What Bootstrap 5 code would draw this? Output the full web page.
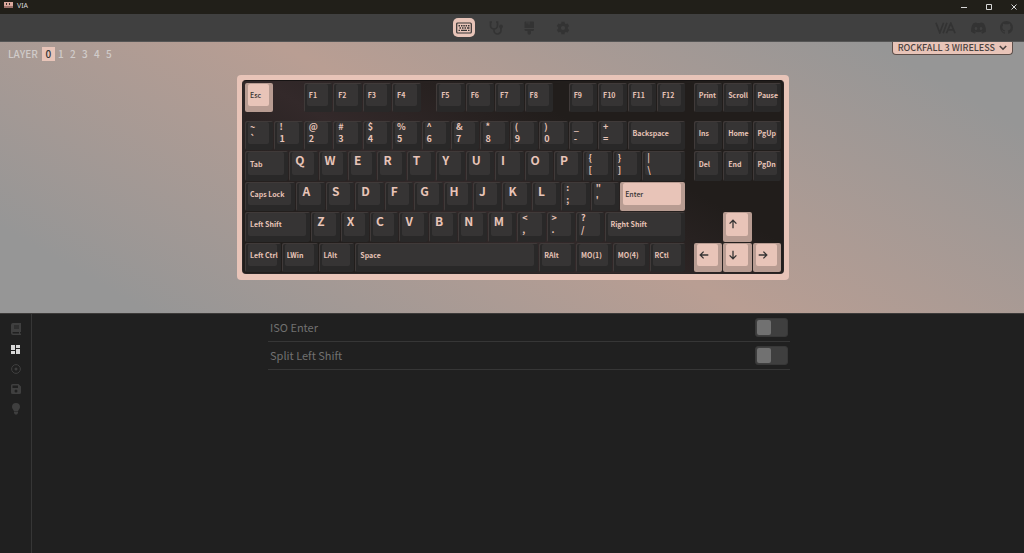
<!DOCTYPE html>
<html lang="en">
<head>
<meta charset="utf-8">
<meta name="viewport" content="width=device-width, initial-scale=1">
<title>VIA</title>
<link href="https://cdn.jsdelivr.net/npm/bootstrap@5.3.0/dist/css/bootstrap.min.css" rel="stylesheet">
<style>
:root { --accent: #e8c4b8; --accent-side: #b89c92; --ink: #363434; --bar: #404040; --panel: #202020; --line: #363636; }
body { font-family: "Noto Sans CJK SC", "Noto Sans", sans-serif; background: var(--panel); }
button { border: 0; background: none; padding: 0; color: inherit; }
svg { display: block; fill: currentColor; }
.titlebar { height: 14px; background: #211f19; color: #d8d8d8; font: 7px/12px "Noto Sans", sans-serif; }
.window-buttons { gap: 19px; padding-right: 7px; }
.topnav { display: grid; grid-template-columns: 1fr auto 1fr; height: 28px; background: var(--bar); border-bottom: 1px solid #555; color: #333; }
.tabs { gap: 11px; padding-left: 2px; }
.site-links { gap: 14px; padding-right: 11px; }
.tab-link { display: grid; place-items: center; width: 22px; height: 19px; border-radius: 5px; color: #333; }
.tab-link.active { background: var(--accent); color: var(--ink); }
.canvas { min-height: 271px; background: linear-gradient(30deg, #969696 10%, #b99e93 50%, #969696 90%); }
.layers { font-size: 10px; font-weight: 500; line-height: 14px; color: #d0cbc9; padding: 5px 0 0 8px; }
.layers button { width: 12px; height: 14px; font-weight: 500; }
.layers .active { width: 13px; background: var(--accent); color: var(--ink); }
.device { height: 13px; padding: 0 5px; border: 1px solid #5c4e49; border-top: 0; border-radius: 0 0 4px 4px; background: var(--accent); color: #4a4240; font-size: 9px; font-weight: 500; line-height: 12px; margin-right: 11px; }
.board-area { padding: 14px 0 0 2px; }
.case { width: 552px; padding: 5px 5px 6px; border-radius: 4px; background: var(--accent); }
.plate { height: 194px; padding: 2px 1px 1px 2px; border-radius: 4px; background: linear-gradient(30deg, #211d1b 15%, #33292a 40%, #211d1b 68%); border: 1px solid #2b2626; border-top-color: #161313; }
.keys { display: grid; grid-template-columns: repeat(73, 1fr); grid-template-rows: repeat(25, 1fr); height: 190px; }
.keycap { display: flex; min-width: 0; margin: 0 1px 1px 0; padding: 1px 4px 6px 3px; border-radius: 2px; background: #292828; box-shadow: inset 1px 1px 0 #403a39; color: var(--accent); text-align: left; }
.keytop { flex: 1; min-width: 0; display: flex; flex-direction: column; justify-content: center; padding-left: 2px; border-radius: 2px; background: #363434; font-size: 7px; font-weight: 700; line-height: 12px; white-space: nowrap; }
.keycap.alpha .keytop { justify-content: flex-start; font-size: 12px; line-height: 15px; padding-left: 3px; }
.keycap.pair .keytop { font-size: 9px; }
.keycap.hot { background: var(--accent-side); box-shadow: none; color: var(--ink); }
.keycap.hot .keytop { background: var(--accent); font-weight: 500; }
.rail { width: 32px; border-right: 1px solid var(--line); color: #3f3f3f; padding-top: 9px; gap: 8px; }
.rail button { display: grid; place-items: center; height: 12px; }
.rail .active { color: #d8d8d8; }
.lower { border-top: 1px solid #3c3a39; min-height: 238px; }
.options { width: 522px; margin-left: 236px; font-size: 11px; color: #717171; }
.option { height: 28px; padding: 0 2px; border-bottom: 1px solid var(--line); }
.form-check-input.toggle { display: flex; align-items: center; width: 33px; height: 19px; margin: 0; padding: 0 1px; border: 1px solid #383838; border-radius: 3px; background: #3f3f3f; }
.toggle::before { content: ""; width: 14px; height: 15px; border-radius: 2px; background: #717171; }
.form-check-input.toggle:checked { justify-content: flex-end; background: var(--accent); }
</style>
</head>
<body class="d-flex flex-column min-vh-100">
<header class="titlebar d-flex justify-content-between">
  <div class="d-flex gap-1 ps-1">
    <svg width="9" height="11" viewBox="0 0 9 11"><path fill="#dba99e" d="M0 2h9v4H0z"/><path fill="#9b706a" d="M0 6h9v2H0z"/><path fill="#39302d" d="M2 3h1v2H2zM5 3h1v2H5z"/></svg>
    <span>VIA</span>
  </div>
  <div class="window-buttons d-flex">
    <button aria-label="Minimise"><svg width="6" height="10"><path d="M0 5h6v1H0z"/></svg></button>
    <button aria-label="Maximise"><svg width="6" height="10" viewBox="0 0 6 10"><path fill="none" stroke="currentColor" d="M.5 2.500h5v5h-5z"/></svg></button>
    <button aria-label="Close"><svg width="6" height="10" viewBox="0 0 6 10"><path fill="none" stroke="currentColor" d="m.5 2.500 5 5m0-5-5 5"/></svg></button>
  </div>
</header>
<nav class="topnav align-items-center">
  <span></span>
  <div class="tabs d-flex">
    <a href="#" class="tab-link active" aria-label="Configure"><svg width="16" height="12" viewBox="0 0 16 12"><rect x=".7" y="1" width="14.600" height="10" rx="1" fill="none" stroke="currentColor" stroke-width="1.200"/><path d="M2.500 3h1.500v1.500H2.500zM5 3h1.500v1.500H5zM7.300 3h1.500v1.500H7.300zM9.600 3h1.500v1.500H9.600zM12 3h1.500v1.500H12zM3.500 5.300H5v1.400H3.500zM6 5.300h1.500v1.400H6zM8.500 5.300H10v1.400H8.500zM11 5.300h2.500v1.400H11zM2.500 7.700H4V9H2.500zM5 7.700h6V9H5zM12 7.700h1.500V9H12z"/></svg></a>
    <a href="#" class="tab-link" aria-label="Key tester"><svg width="15" height="14" viewBox="0 0 15 14"><path fill="none" stroke="currentColor" stroke-width="1.700" d="M3 1H1.500v3.500a3.500 3.500 0 0 0 7 0V1H7M5 8v1.500a3.500 3.500 0 0 0 7 0V7"/><circle cx="12" cy="5.500" r="1.900"/></svg></a>
    <a href="#" class="tab-link" aria-label="Design"><svg width="11" height="14" viewBox="0 0 11 14"><path d="M1.500.5h1v2h1v-2h1v3h1v-3H9a1 1 0 0 1 1 1V7H.5V1.500a1 1 0 0 1 1-1zM.5 8H10v.5a1.500 1.500 0 0 1-1.500 1.500H7v2a1.700 1.700 0 0 1-3.500 0v-2H2A1.500 1.500 0 0 1 .5 8.500z"/></svg></a>
    <a href="#" class="tab-link" aria-label="Settings"><svg width="14" height="14" viewBox="0 0 14 14"><path fill-rule="evenodd" d="M5.500.8h3l.4 1.700 1.100.6 1.700-.5 1.400 2.500-1.200 1.200v1.400l1.200 1.200-1.400 2.500-1.700-.5-1.100.6-.4 1.700h-3l-.4-1.700-1.100-.6-1.700.5L.9 8.900l1.200-1.200V6.300L.9 5.100l1.400-2.500 1.700.5 1.100-.6zM7 4.900a2.100 2.100 0 1 0 0 4.200 2.100 2.100 0 0 0 0-4.200z"/></svg></a>
  </div>
  <div class="site-links d-flex justify-content-end align-items-center">
    <a href="#" class="text-reset" aria-label="VIA site"><svg width="22" height="12" viewBox="0 0 23 12"><path fill="none" stroke="currentColor" stroke-width="1.800" d="m1 .5 4 10.500L9 .5M12.500.5l-4 11M12 11.500 16.500 1l4.500 10.500M14 8h6"/></svg></a>
    <a href="#" class="text-reset" aria-label="Discord"><svg width="15" height="12" viewBox="0 0 16 12"><path fill-rule="evenodd" d="M13.500 1A13 13 0 0 0 10.300 0l-.5.900a12 12 0 0 0-3.600 0L5.700 0a13 13 0 0 0-3.200 1C.4 4-.1 7 .1 10a13 13 0 0 0 4 2l1-1.500-1.500-.7.3-.3a9.500 9.500 0 0 0 8.200 0l.3.300-1.500.7 1 1.500a13 13 0 0 0 4-2c.3-3.500-.6-6.500-2.400-9zM5.300 8C4.500 8 3.900 7.300 3.900 6.400s.6-1.600 1.400-1.600 1.500.7 1.400 1.600C6.700 7.300 6.100 8 5.300 8zm5.400 0c-.8 0-1.400-.7-1.400-1.600s.6-1.600 1.400-1.600 1.500.7 1.400 1.600c0 .9-.6 1.600-1.400 1.600z"/></svg></a>
    <a href="#" class="text-reset" aria-label="GitHub"><svg width="13" height="13" viewBox="0 0 16 16"><path d="M8 0C3.580 0 0 3.580 0 8c0 3.540 2.290 6.530 5.470 7.590.4.070.55-.17.55-.38v-1.490c-2.010.37-2.530-.49-2.690-.94-.09-.23-.48-.94-.82-1.130-.28-.15-.68-.52-.01-.53.630-.01 1.080.58 1.230.82.720 1.210 1.870.87 2.330.66.070-.52.280-.87.510-1.070-1.780-.2-3.640-.89-3.640-3.950 0-.87.310-1.590.82-2.150-.08-.2-.36-1.020.08-2.120 0 0 .67-.21 2.200.82a7.500 7.500 0 0 1 4 0c1.530-1.040 2.200-.82 2.200-.82.44 1.100.16 1.920.08 2.120.51.56.82 1.270.82 2.150 0 3.070-1.870 3.750-3.650 3.950.29.250.54.730.54 1.480v2.200c0 .21.15.46.55.38A8 8 0 0 0 16 8c0-4.420-3.580-8-8-8z"/></svg></a>
  </div>
</nav>
<main class="flex-grow-1 d-flex flex-column">
  <section class="canvas">
    <div class="d-flex justify-content-between align-items-start">
      <div class="layers d-flex"><span class="me-1">LAYER</span><button class="active">0</button><button>1</button><button>2</button><button>3</button><button>4</button><button>5</button></div>
      <button class="device d-flex align-items-center gap-1">ROCKFALL 3 WIRELESS <svg width="8" height="6" viewBox="0 0 8 6"><path fill="none" stroke="currentColor" stroke-width="1.600" d="m.8 1 3.200 3.200L7.200 1"/></svg></button>
    </div>
    <div class="board-area"><div class="case mx-auto"><div class="plate"><div class="keys" id="keys"></div></div></div></div>
  </section>
  <section class="lower flex-grow-1 d-flex">
    <nav class="rail d-flex flex-column align-items-stretch">
      <button aria-label="Keymap"><svg width="10" height="12" viewBox="0 0 10 12"><path fill-rule="evenodd" d="M2 0h8v9H9v1.500h1V12H2a2 2 0 0 1-2-2V2a2 2 0 0 1 2-2zm1 2.500v1h5v-1zm0 2v1h5v-1zM2 9a.8.8 0 0 0 0 1.500h6V9z"/></svg></button>
      <button aria-label="Layouts" class="active"><svg width="9" height="9" viewBox="0 0 9 9"><path d="M0 0h4v5H0zM5 0h4v3H5zM0 6h4v3H0zM5 4h4v5H5z"/></svg></button>
      <button aria-label="Macros"><svg width="10" height="10" viewBox="0 0 10 10"><circle cx="5" cy="5" r="4.400" fill="none" stroke="currentColor"/><circle cx="5" cy="5" r="1.500"/></svg></button>
      <button aria-label="Save and load"><svg width="10" height="10" viewBox="0 0 10 10"><path fill-rule="evenodd" d="M1.500 0h6L10 2.500v6A1.500 1.500 0 0 1 8.500 10h-7A1.500 1.500 0 0 1 0 8.500v-7A1.500 1.500 0 0 1 1.500 0zm0 1.500V4H7V1.500zM5 5.500a1.500 1.500 0 1 0 0 3 1.500 1.500 0 0 0 0-3z"/></svg></button>
      <button aria-label="Lighting"><svg width="8" height="12" viewBox="0 0 8 12"><path d="M4 0a4 4 0 0 1 4 4c0 2-1.700 2.700-2 4.500H2C1.700 6.700 0 6 0 4a4 4 0 0 1 4-4zM2 9h4v1l-1 1.500H3L2 10z"/></svg></button>
    </nav>
    <div class="options">
      <div class="option d-flex align-items-center justify-content-between"><label for="iso">ISO Enter</label><input type="checkbox" id="iso" class="form-check-input toggle"></div>
      <div class="option d-flex align-items-center justify-content-between"><label for="split">Split Left Shift</label><input type="checkbox" id="split" class="form-check-input toggle"></div>
    </div>
  </section>
</main>
<script src="https://cdn.jsdelivr.net/npm/bootstrap@5.3.0/dist/js/bootstrap.bundle.min.js"></script>
<script>
// Each row: top in quarter units, then [label, width in units]; a bare number is a gap.
const rows = [
  [0, ["*Esc"], 1, "F1", "F2", "F3", "F4", .5, "F5", "F6", "F7", "F8", .5, "F9", "F10", "F11", "F12", .25, "Print", "Scroll", "Pause"],
  [5, "~\n`", "!\n1", "@\n2", "#\n3", "$\n4", "%\n5", "^\n6", "&\n7", "*\n8", "(\n9", ")\n0", "_\n-", "+\n=", ["Backspace", 2], .25, "Ins", "Home", "PgUp"],
  [9, ["Tab", 1.5], ..."QWERTYUIOP", "{\n[", "}\n]", ["|\n\\", 1.5], .25, "Del", "End", "PgDn"],
  [13, ["Caps Lock", 1.75], ..."ASDFGHJKL", ":\n;", "\"\n'", ["*Enter", 2.25]],
  [17, ["Left Shift", 2.25], ..."ZXCVBNM", "<\n,", ">\n.", "?\n/", ["Right Shift", 2.75], 1.25, "*up"],
  [21, ["Left Ctrl", 1.25], ["LWin", 1.25], ["LAlt", 1.25], ["Space", 6.25], ["RAlt", 1.25], ["MO(1)", 1.25], ["MO(4)", 1.25], ["RCtl", 1.25], .25, "*left", "*down", "*right"]
];
const turns = { up: 0, right: 90, down: 180, left: 270 };
const board = document.getElementById("keys");
for (const [top, ...items] of rows) {
  let x = 0;
  for (const item of items) {
    if (typeof item === "number") { x += item; continue; }
    let [label, width = 1] = Array.isArray(item) ? item : [item];
    const key = document.createElement("button"), face = document.createElement("span");
    key.className = "keycap";
    face.className = "keytop";
    if (label[0] === "*" && label[1] !== "\n") { key.classList.add("hot"); label = label.slice(1); }
    if (label in turns) {
      key.setAttribute("aria-label", label);
      face.innerHTML = `<svg width="10" height="10" viewBox="0 0 10 10"><path transform="rotate(${turns[label]} 5 5)" fill="none" stroke="currentColor" stroke-width="1.3" d="M5 9.300V1.400M1.600 4.600 5 1.200l3.400 3.400"/></svg>`;
    } else {
      const parts = label.split("\n");
      if (parts.length > 1) key.classList.add("pair");
      else if (label.length === 1) key.classList.add("alpha");
      for (const part of parts) { const line = document.createElement("span"); line.textContent = part; face.append(line); }
    }
    key.append(face);
    key.style.gridArea = `${top + 1} / ${x * 4 + 1} / span 4 / span ${width * 4}`;
    board.append(key);
    x += width;
  }
}
</script>
</body>
</html>
